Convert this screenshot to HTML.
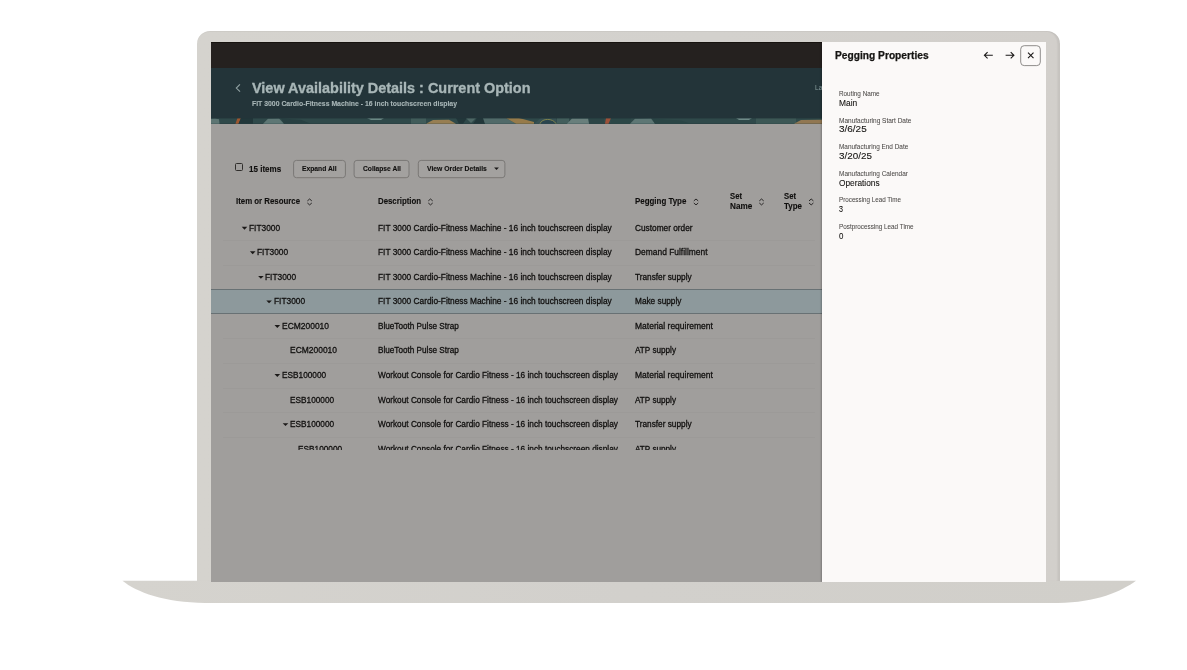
<!DOCTYPE html>
<html><head><meta charset="utf-8">
<style>
html,body{margin:0;padding:0;background:#fff;}
body{width:1187px;height:670px;position:relative;overflow:hidden;font-family:"Liberation Sans",sans-serif;}
.abs{position:absolute;}
#frame{left:197px;top:30.7px;width:863.4px;height:550.6px;background:linear-gradient(90deg,#d5d3ce 0%,#d3d1cd 60%,#d2cfcb 100%);border-radius:13px 13px 0 0;box-shadow:inset -3px 0 1.5px -0.5px rgba(0,0,0,0.06), inset 0 1px 0 rgba(0,0,0,0.03);}
#base{left:0;top:0;}
#screen{left:211px;top:42px;width:835px;height:539.8px;background:#a09e9c;overflow:hidden;}
#topbar{left:0;top:0;width:611px;height:26px;background:#25211f;box-shadow:inset 0 1px 0 #17130f;}
#hdr{left:0;top:26px;width:611px;height:55.6px;background:#233439;}
#strip{left:0;top:75.9px;height:5.7px;width:611px;filter:blur(0.5px);opacity:0.78;}
#panel{left:611px;top:0;width:224px;height:540px;background:#fbf9f8;box-shadow:-1px 0 1.5px rgba(0,0,0,0.22);}
#tclip{left:0;top:0;width:611px;height:408px;overflow:hidden;}
.t{position:absolute;white-space:nowrap;line-height:1;transform-origin:0 50%;-webkit-text-stroke:0.3px currentColor;}
#tclip,#ptxt{filter:blur(0.35px);}
.btn{position:absolute;box-sizing:border-box;border:1px solid #7c7a78;border-radius:3px;height:18.8px;top:117.6px;background:#a3a19f;}
.sel{position:absolute;left:0;top:247.1px;width:611px;height:24.5px;background:#8d999c;border-top:1px solid #687174;border-bottom:1px solid #687174;box-sizing:border-box;}
.sep{position:absolute;height:1px;background:rgba(0,0,0,0.025);left:12px;width:592px;}
</style></head><body>
<svg id="base" class="abs" width="1187" height="670" viewBox="0 0 1187 670">
<defs><linearGradient id="bg" x1="0" x2="1" y1="0" y2="0"><stop offset="0" stop-color="#d5d3ce"/><stop offset="0.5" stop-color="#d2d0cc"/><stop offset="1" stop-color="#d1cfca"/></linearGradient></defs>
<path d="M122.5 580.8 L1136 580.8 C1122 591 1096 602.9 1058 602.9 L205 602.9 C165 602.9 136 592 122.5 580.8 Z" fill="url(#bg)"/>
</svg>
<div id="frame" class="abs"></div>
<div id="screen" class="abs">
 <div id="topbar" class="abs"></div>
 <div id="hdr" class="abs"></div>
 <svg id="strip" class="abs" preserveAspectRatio="none" viewBox="0 0 611 7"><rect width="611" height="7" fill="#33504f"/>
<polygon points="0,1 4,0.5 8,1.5 8.5,7 0,7" fill="#6e8884"/>
<polygon points="26.5,0 30,0 27.5,7 24.5,7" fill="#c0622f"/>
<polygon points="30,0 42,0 42,7 27.5,7" fill="#22383b"/>
<polygon points="52,7 57,1 68,0.5 73,7" fill="#6f8a86"/>
<polygon points="73,7 70,0.5 90,2 100,7" fill="#2a4445"/>
<polygon points="156,0 173,0 170,2.5 160,2.5" fill="#7fa09a"/>
<rect x="200" y="0" width="15" height="7" fill="#4a6864"/>
<polygon points="215,7 222,2.5 238,2 245,7" fill="#b8935a"/>
<polygon points="245,0 256,0 252,7 248,7" fill="#22383b"/>
<polygon points="255,0 265,0 260,6" fill="#5a7672"/>
<polygon points="262,7 266,0 272,0 274,7" fill="#22383b"/>
<polygon points="272,0 295,0 305,7 274,7" fill="#5f7a77"/>
<polygon points="295,0 308,0 323,5 323,7 305,7" fill="#b8904f"/>
<polygon points="323,7 330,0 345,0 346,7" fill="#3d5a5c"/>
<path d="M329 7 C331 0, 342 0, 345 7" fill="#2c4a55" stroke="#a3a052" stroke-width="1"/>
<rect x="346" y="0" width="12" height="7" fill="#4d6b66"/>
<polygon points="356,7 361,0.5 377,0.5 378,7" fill="#7d9590"/>
<rect x="378" y="0" width="15" height="7" fill="#2f4b4a"/>
<polygon points="395,0 400,0 397.5,7 394,7" fill="#c05a3a"/>
<rect x="400" y="0" width="20" height="7" fill="#2f4d4b"/>
<polygon points="419,7 424,1 440,0.5 444,7" fill="#6f8a86"/>
<polygon points="444,7 441,0.5 470,3 480,7" fill="#2d4a49"/>
<polygon points="525,0 541,0 538,2.5 528,2.5" fill="#84a39d"/>
<rect x="545" y="0" width="40" height="7" fill="#44625e"/>
<polygon points="583,7 590,2.5 611,2 611,7" fill="#b08a5a"/>
<rect width="611" height="1" fill="#22343a" opacity="0.5"/></svg>
 <div id="tclip" class="abs">
 <div class="sep" style="top:198.20px"></div><div class="sep" style="top:222.75px"></div><div class="sep" style="top:296.40px"></div><div class="sep" style="top:320.95px"></div><div class="sep" style="top:345.50px"></div><div class="sep" style="top:370.05px"></div><div class="sep" style="top:394.60px"></div>
 <div class="sel"></div>
 <div class="abs" style="left:24px;top:121px;width:8px;height:8px;box-sizing:border-box;border:1px solid #302e2c;border-radius:1.5px"></div>
 <svg class="abs" style="left:0;top:0" width="611" height="540" viewBox="0 0 611 540" fill="#1b1918"><rect x="82.6" y="118.4" width="51.8" height="17.3" rx="2.8" fill="#a3a19f" stroke="#7a7876" stroke-width="1"/><rect x="143.1" y="118.4" width="54.9" height="17.3" rx="2.8" fill="#a3a19f" stroke="#7a7876" stroke-width="1"/><rect x="207.3" y="118.4" width="86.6" height="17.3" rx="2.8" fill="#a3a19f" stroke="#7a7876" stroke-width="1"/><polygon points="30.7,184.8 36.3,184.8 33.5,187.7"/><polygon points="38.9,209.3 44.5,209.3 41.7,212.2"/><polygon points="47.1,233.9 52.7,233.9 49.9,236.8"/><polygon points="55.3,258.4 60.9,258.4 58.1,261.3"/><polygon points="63.5,283.0 69.1,283.0 66.3,285.9"/><polygon points="63.5,332.1 69.1,332.1 66.3,335.0"/><polygon points="71.7,381.2 77.3,381.2 74.5,384.1"/>
 <polygon points="283.1,125.6 287.9,125.6 285.5,128.1"/>
 <path d="M96.4 158.9 L98.6 157.0 L100.8 158.9 M96.4 161.0 L98.6 162.9 L100.8 161.0" fill="none" stroke="#1b1918" stroke-width="0.9"/><path d="M217.3 158.9 L219.5 157.0 L221.7 158.9 M217.3 161.0 L219.5 162.9 L221.7 161.0" fill="none" stroke="#1b1918" stroke-width="0.9"/><path d="M482.8 158.9 L485.0 157.0 L487.2 158.9 M482.8 161.0 L485.0 162.9 L487.2 161.0" fill="none" stroke="#1b1918" stroke-width="0.9"/><path d="M548.3 158.9 L550.5 157.0 L552.7 158.9 M548.3 161.0 L550.5 162.9 L552.7 161.0" fill="none" stroke="#1b1918" stroke-width="0.9"/><path d="M598.0 158.9 L600.2 157.0 L602.4 158.9 M598.0 161.0 L600.2 162.9 L602.4 161.0" fill="none" stroke="#1b1918" stroke-width="0.9"/><path d="M28.95 42.4 L25.3 46.1 L29.05 49.7" fill="none" stroke="#91a2a3" stroke-width="1.1"/>
 </svg>
<span class="t" style="left:41.00px;top:38px;font-size:15.1px;font-weight:700;color:#a8b6b7;transform:scaleX(0.9560);-webkit-text-stroke-width:0.35px">View Availability Details : Current Option</span>
<span class="t" style="left:41.00px;top:58px;font-size:7.5px;font-weight:700;color:#a8b6b7;transform:scaleX(0.9159);-webkit-text-stroke-width:0.12px">FIT 3000 Cardio-Fitness Machine - 16 inch touchscreen display</span>
<span class="t" style="left:603.90px;top:42px;font-size:7.8px;font-weight:400;color:#8a9fa0;transform:scaleX(0.8542);-webkit-text-stroke-width:0px">Last</span>
<span class="t" style="left:37.60px;top:123px;font-size:8.8px;font-weight:700;color:#100f0e;transform:scaleX(0.9143);-webkit-text-stroke-width:0.12px">15 items</span>
<span class="t" style="left:91.30px;top:123px;font-size:7.9px;font-weight:700;color:#100f0e;transform:scaleX(0.8547);-webkit-text-stroke-width:0.12px">Expand All</span>
<span class="t" style="left:151.90px;top:123px;font-size:7.9px;font-weight:700;color:#100f0e;transform:scaleX(0.8446);-webkit-text-stroke-width:0.12px">Collapse All</span>
<span class="t" style="left:215.90px;top:123px;font-size:7.9px;font-weight:700;color:#100f0e;transform:scaleX(0.8607);-webkit-text-stroke-width:0.12px">View Order Details</span>
<span class="t" style="left:25.10px;top:155px;font-size:9.3px;font-weight:700;color:#100f0e;transform:scaleX(0.8439);-webkit-text-stroke-width:0.12px">Item or Resource</span>
<span class="t" style="left:167.00px;top:155px;font-size:9.3px;font-weight:700;color:#100f0e;transform:scaleX(0.8425);-webkit-text-stroke-width:0.12px">Description</span>
<span class="t" style="left:424.40px;top:155px;font-size:9.3px;font-weight:700;color:#100f0e;transform:scaleX(0.8512);-webkit-text-stroke-width:0.12px">Pegging Type</span>
<span class="t" style="left:519.00px;top:150px;font-size:9.3px;font-weight:700;color:#100f0e;transform:scaleX(0.8294);-webkit-text-stroke-width:0.12px">Set</span>
<span class="t" style="left:519.00px;top:160px;font-size:9.3px;font-weight:700;color:#100f0e;transform:scaleX(0.8804);-webkit-text-stroke-width:0.12px">Name</span>
<span class="t" style="left:573.00px;top:150px;font-size:9.3px;font-weight:700;color:#100f0e;transform:scaleX(0.8294);-webkit-text-stroke-width:0.12px">Set</span>
<span class="t" style="left:573.00px;top:160px;font-size:9.3px;font-weight:700;color:#100f0e;transform:scaleX(0.8517);-webkit-text-stroke-width:0.12px">Type</span>
<span class="t" style="left:37.90px;top:181px;font-size:9.4px;font-weight:400;color:#100f0e;transform:scaleX(0.8906);-webkit-text-stroke-width:0.3px">FIT3000</span>
<span class="t" style="left:167.00px;top:181px;font-size:9.4px;font-weight:400;color:#100f0e;transform:scaleX(0.8886);-webkit-text-stroke-width:0.3px">FIT 3000 Cardio-Fitness Machine - 16 inch touchscreen display</span>
<span class="t" style="left:424.40px;top:181px;font-size:9.4px;font-weight:400;color:#100f0e;transform:scaleX(0.8842);-webkit-text-stroke-width:0.3px">Customer order</span>
<span class="t" style="left:46.10px;top:205px;font-size:9.4px;font-weight:400;color:#100f0e;transform:scaleX(0.8906);-webkit-text-stroke-width:0.3px">FIT3000</span>
<span class="t" style="left:167.00px;top:205px;font-size:9.4px;font-weight:400;color:#100f0e;transform:scaleX(0.8886);-webkit-text-stroke-width:0.3px">FIT 3000 Cardio-Fitness Machine - 16 inch touchscreen display</span>
<span class="t" style="left:424.40px;top:205px;font-size:9.4px;font-weight:400;color:#100f0e;transform:scaleX(0.8977);-webkit-text-stroke-width:0.3px">Demand Fulfillment</span>
<span class="t" style="left:54.30px;top:230px;font-size:9.4px;font-weight:400;color:#100f0e;transform:scaleX(0.8906);-webkit-text-stroke-width:0.3px">FIT3000</span>
<span class="t" style="left:167.00px;top:230px;font-size:9.4px;font-weight:400;color:#100f0e;transform:scaleX(0.8886);-webkit-text-stroke-width:0.3px">FIT 3000 Cardio-Fitness Machine - 16 inch touchscreen display</span>
<span class="t" style="left:424.40px;top:230px;font-size:9.4px;font-weight:400;color:#100f0e;transform:scaleX(0.8807);-webkit-text-stroke-width:0.3px">Transfer supply</span>
<span class="t" style="left:62.50px;top:254px;font-size:9.4px;font-weight:400;color:#100f0e;transform:scaleX(0.8906);-webkit-text-stroke-width:0.3px">FIT3000</span>
<span class="t" style="left:167.00px;top:254px;font-size:9.4px;font-weight:400;color:#100f0e;transform:scaleX(0.8886);-webkit-text-stroke-width:0.3px">FIT 3000 Cardio-Fitness Machine - 16 inch touchscreen display</span>
<span class="t" style="left:424.40px;top:254px;font-size:9.4px;font-weight:400;color:#100f0e;transform:scaleX(0.8814);-webkit-text-stroke-width:0.3px">Make supply</span>
<span class="t" style="left:70.70px;top:279px;font-size:9.4px;font-weight:400;color:#100f0e;transform:scaleX(0.9017);-webkit-text-stroke-width:0.3px">ECM200010</span>
<span class="t" style="left:167.00px;top:279px;font-size:9.4px;font-weight:400;color:#100f0e;transform:scaleX(0.8710);-webkit-text-stroke-width:0.3px">BlueTooth Pulse Strap</span>
<span class="t" style="left:424.40px;top:279px;font-size:9.4px;font-weight:400;color:#100f0e;transform:scaleX(0.9060);-webkit-text-stroke-width:0.3px">Material requirement</span>
<span class="t" style="left:78.90px;top:303px;font-size:9.4px;font-weight:400;color:#100f0e;transform:scaleX(0.9017);-webkit-text-stroke-width:0.3px">ECM200010</span>
<span class="t" style="left:167.00px;top:303px;font-size:9.4px;font-weight:400;color:#100f0e;transform:scaleX(0.8710);-webkit-text-stroke-width:0.3px">BlueTooth Pulse Strap</span>
<span class="t" style="left:424.40px;top:303px;font-size:9.4px;font-weight:400;color:#100f0e;transform:scaleX(0.8709);-webkit-text-stroke-width:0.3px">ATP supply</span>
<span class="t" style="left:70.70px;top:328px;font-size:9.4px;font-weight:400;color:#100f0e;transform:scaleX(0.8812);-webkit-text-stroke-width:0.3px">ESB100000</span>
<span class="t" style="left:167.00px;top:328px;font-size:9.4px;font-weight:400;color:#100f0e;transform:scaleX(0.8808);-webkit-text-stroke-width:0.3px">Workout Console for Cardio Fitness - 16 inch touchscreen display</span>
<span class="t" style="left:424.40px;top:328px;font-size:9.4px;font-weight:400;color:#100f0e;transform:scaleX(0.9060);-webkit-text-stroke-width:0.3px">Material requirement</span>
<span class="t" style="left:78.90px;top:353px;font-size:9.4px;font-weight:400;color:#100f0e;transform:scaleX(0.8812);-webkit-text-stroke-width:0.3px">ESB100000</span>
<span class="t" style="left:167.00px;top:353px;font-size:9.4px;font-weight:400;color:#100f0e;transform:scaleX(0.8808);-webkit-text-stroke-width:0.3px">Workout Console for Cardio Fitness - 16 inch touchscreen display</span>
<span class="t" style="left:424.40px;top:353px;font-size:9.4px;font-weight:400;color:#100f0e;transform:scaleX(0.8709);-webkit-text-stroke-width:0.3px">ATP supply</span>
<span class="t" style="left:78.90px;top:377px;font-size:9.4px;font-weight:400;color:#100f0e;transform:scaleX(0.8812);-webkit-text-stroke-width:0.3px">ESB100000</span>
<span class="t" style="left:167.00px;top:377px;font-size:9.4px;font-weight:400;color:#100f0e;transform:scaleX(0.8808);-webkit-text-stroke-width:0.3px">Workout Console for Cardio Fitness - 16 inch touchscreen display</span>
<span class="t" style="left:424.40px;top:377px;font-size:9.4px;font-weight:400;color:#100f0e;transform:scaleX(0.8807);-webkit-text-stroke-width:0.3px">Transfer supply</span>
<span class="t" style="left:87.10px;top:402px;font-size:9.4px;font-weight:400;color:#100f0e;transform:scaleX(0.8812);-webkit-text-stroke-width:0.3px">ESB100000</span>
<span class="t" style="left:167.00px;top:402px;font-size:9.4px;font-weight:400;color:#100f0e;transform:scaleX(0.8808);-webkit-text-stroke-width:0.3px">Workout Console for Cardio Fitness - 16 inch touchscreen display</span>
<span class="t" style="left:424.40px;top:402px;font-size:9.4px;font-weight:400;color:#100f0e;transform:scaleX(0.8709);-webkit-text-stroke-width:0.3px">ATP supply</span>
 </div>
 <div id="panel" class="abs"></div>
<svg class="abs" style="left:0;top:0" width="835" height="540" viewBox="0 0 835 540" fill="none" stroke="#1b1918" stroke-width="1.1">
<path d="M781.8 13.3 L773.4 13.3 M776.6 10.2 L773.4 13.3 L776.6 16.4"/>
<path d="M794.6 13.3 L802.9 13.3 M799.7 10.2 L802.9 13.3 L799.7 16.4"/>
<rect x="809.7" y="3.7" width="19.6" height="19.9" rx="3.5" stroke="#8f8d8b" stroke-width="1" fill="#fbf9f8"/>
<path d="M817 10.6 L822.5 16.1 M822.5 10.6 L817 16.1"/>
</svg>
<div id="ptxt" class="abs" style="left:0;top:0;width:835px;height:540px">
<span class="t" style="left:623.60px;top:9px;font-size:10.4px;font-weight:700;color:#161513;transform:scaleX(0.9824);-webkit-text-stroke-width:0.25px">Pegging Properties</span>
<span class="t" style="left:627.90px;top:49px;font-size:6.7px;font-weight:400;color:#4b4947;transform:scaleX(0.9497);-webkit-text-stroke-width:0.05px">Routing Name</span>
<span class="t" style="left:627.90px;top:57px;font-size:8.8px;font-weight:400;color:#161513;transform:scaleX(0.9540);-webkit-text-stroke-width:0.1px">Main</span>
<span class="t" style="left:627.90px;top:76px;font-size:6.7px;font-weight:400;color:#4b4947;transform:scaleX(0.9739);-webkit-text-stroke-width:0.05px">Manufacturing Start Date</span>
<span class="t" style="left:627.90px;top:83px;font-size:8.8px;font-weight:400;color:#161513;transform:scaleX(1.1321);-webkit-text-stroke-width:0.1px">3/6/25</span>
<span class="t" style="left:627.90px;top:102px;font-size:6.7px;font-weight:400;color:#4b4947;transform:scaleX(0.9608);-webkit-text-stroke-width:0.05px">Manufacturing End Date</span>
<span class="t" style="left:627.90px;top:110px;font-size:8.8px;font-weight:400;color:#161513;transform:scaleX(1.1206);-webkit-text-stroke-width:0.1px">3/20/25</span>
<span class="t" style="left:627.90px;top:129px;font-size:6.7px;font-weight:400;color:#4b4947;transform:scaleX(0.9653);-webkit-text-stroke-width:0.05px">Manufacturing Calendar</span>
<span class="t" style="left:627.90px;top:137px;font-size:8.8px;font-weight:400;color:#161513;transform:scaleX(0.9435);-webkit-text-stroke-width:0.1px">Operations</span>
<span class="t" style="left:627.90px;top:155px;font-size:6.7px;font-weight:400;color:#4b4947;transform:scaleX(0.9370);-webkit-text-stroke-width:0.05px">Processing Lead Time</span>
<span class="t" style="left:627.90px;top:163px;font-size:8.8px;font-weight:400;color:#161513;transform:scaleX(0.8153);-webkit-text-stroke-width:0.1px">3</span>
<span class="t" style="left:627.90px;top:182px;font-size:6.7px;font-weight:400;color:#4b4947;transform:scaleX(0.9466);-webkit-text-stroke-width:0.05px">Postprocessing Lead Time</span>
<span class="t" style="left:627.90px;top:190px;font-size:8.8px;font-weight:400;color:#161513;transform:scaleX(0.8968);-webkit-text-stroke-width:0.1px">0</span>
</div>
</div>
</body></html>
